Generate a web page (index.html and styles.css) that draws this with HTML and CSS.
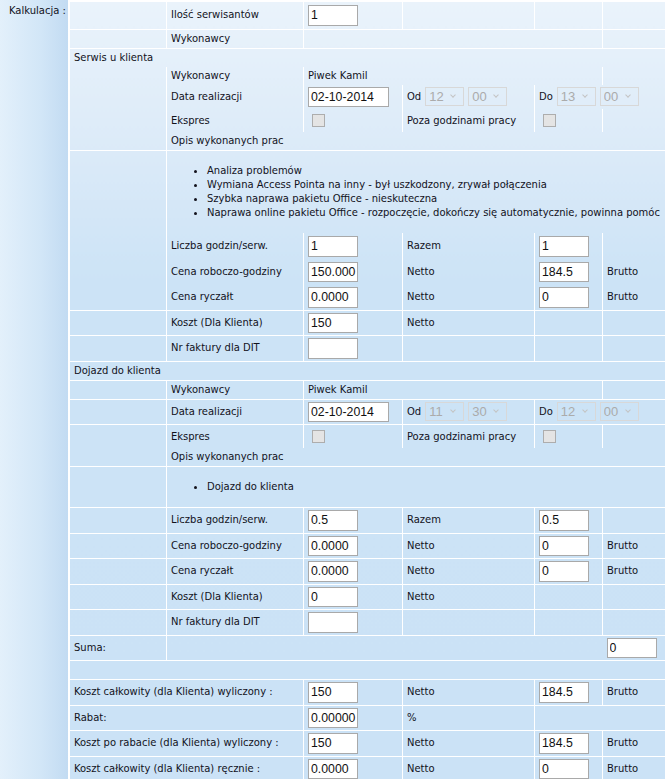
FILE: index.html
```html
<!DOCTYPE html>
<html lang="pl">
<head>
  <meta charset="UTF-8" />
  <title>Kalkulacja</title>
  <link rel="stylesheet" href="styles.css">
</head>
<body>

<div class="wrap">
  <!-- etykieta sekcji -->
  <div class="side">Kalkulacja :</div>

  <table class="calc">
    <colgroup>
      <col class="c1"><col class="c2"><col class="c3"><col class="c4"><col class="c5"><col class="c6">
    </colgroup>

    <tr class="first">
      <td></td><td>Ilość serwisantów</td><td><input class="num" value="1"></td><td></td><td></td><td></td>
    </tr>
    <tr>
      <td></td><td>Wykonawcy</td><td colspan="3"></td><td></td>
    </tr>
    <tr>
      <td colspan="6" class="sec">Serwis u klienta</td>
    </tr>

    <!-- Serwis u klienta -->
    <tr class="nt">
      <td></td><td>Wykonawcy</td><td colspan="3">Piwek Kamil</td><td></td>
    </tr>
    <tr class="nt">
      <td></td><td>Data realizacji</td>
      <td><input class="num date" value="02-10-2014"></td>
      <td>Od<span class="sel"><select disabled><option>12</option></select></span><span class="sel"><select disabled><option>00</option></select></span></td>
      <td colspan="2">Do<span class="sel"><select disabled><option>13</option></select></span><span class="sel"><select disabled><option>00</option></select></span></td>
    </tr>
    <tr class="nt">
      <td></td><td>Ekspres</td><td><input type="checkbox" disabled></td><td>Poza godzinami pracy</td><td><input type="checkbox" disabled></td><td></td>
    </tr>
    <tr class="nt">
      <td></td><td colspan="5">Opis wykonanych prac</td>
    </tr>
    <tr>
      <td></td>
      <td colspan="5">
        <ul class="jobs">
          <li>Analiza problemów</li>
          <li>Wymiana Access Pointa na inny - był uszkodzony, zrywał połączenia</li>
          <li>Szybka naprawa pakietu Office - nieskuteczna</li>
          <li>Naprawa online pakietu Office - rozpoczęcie, dokończy się automatycznie, powinna pomóc</li>
        </ul>
      </td>
    </tr>
    <tr class="nt pad">
      <td></td><td>Liczba godzin/serw.</td><td><input class="num" value="1"></td><td>Razem</td><td><input class="num" value="1"></td><td></td>
    </tr>
    <tr class="nt pad">
      <td></td><td>Cena roboczo-godziny</td><td><input class="num" value="150.000"></td><td>Netto</td><td><input class="num" value="184.5"></td><td>Brutto</td>
    </tr>
    <tr class="nt pad">
      <td></td><td>Cena ryczałt</td><td><input class="num" value="0.0000"></td><td>Netto</td><td><input class="num" value="0"></td><td>Brutto</td>
    </tr>
    <tr>
      <td></td><td>Koszt (Dla Klienta)</td><td><input class="num" value="150"></td><td>Netto</td><td></td><td></td>
    </tr>
    <tr>
      <td></td><td>Nr faktury dla DIT</td><td><input class="num" value=""></td><td></td><td></td><td></td>
    </tr>
    <tr>
      <td colspan="6" class="sec">Dojazd do klienta</td>
    </tr>

    <!-- Dojazd do klienta -->
    <tr>
      <td></td><td>Wykonawcy</td><td colspan="3">Piwek Kamil</td><td></td>
    </tr>
    <tr>
      <td></td><td>Data realizacji</td>
      <td><input class="num date" value="02-10-2014"></td>
      <td>Od<span class="sel"><select disabled><option>11</option></select></span><span class="sel"><select disabled><option>30</option></select></span></td>
      <td colspan="2">Do<span class="sel"><select disabled><option>12</option></select></span><span class="sel"><select disabled><option>00</option></select></span></td>
    </tr>
    <tr>
      <td></td><td>Ekspres</td><td><input type="checkbox" disabled></td><td>Poza godzinami pracy</td><td><input type="checkbox" disabled></td><td></td>
    </tr>
    <tr class="nt">
      <td></td><td colspan="5">Opis wykonanych prac</td>
    </tr>
    <tr>
      <td></td>
      <td colspan="5">
        <ul class="jobs">
          <li>Dojazd do klienta</li>
        </ul>
      </td>
    </tr>
    <tr>
      <td></td><td>Liczba godzin/serw.</td><td><input class="num" value="0.5"></td><td>Razem</td><td><input class="num" value="0.5"></td><td></td>
    </tr>
    <tr>
      <td></td><td>Cena roboczo-godziny</td><td><input class="num" value="0.0000"></td><td>Netto</td><td><input class="num" value="0"></td><td>Brutto</td>
    </tr>
    <tr>
      <td></td><td>Cena ryczałt</td><td><input class="num" value="0.0000"></td><td>Netto</td><td><input class="num" value="0"></td><td>Brutto</td>
    </tr>
    <tr>
      <td></td><td>Koszt (Dla Klienta)</td><td><input class="num" value="0"></td><td>Netto</td><td></td><td></td>
    </tr>
    <tr>
      <td></td><td>Nr faktury dla DIT</td><td><input class="num" value=""></td><td></td><td></td><td></td>
    </tr>

    <!-- podsumowanie -->
    <tr>
      <td class="sec">Suma:</td><td colspan="4" class="nr"></td><td><input class="num" value="0"></td>
    </tr>
    <tr>
      <td colspan="6" class="sec">&nbsp;</td>
    </tr>
    <tr>
      <td colspan="2" class="sec">Koszt całkowity (dla Klienta) wyliczony :</td><td><input class="num" value="150"></td><td>Netto</td><td><input class="num" value="184.5"></td><td>Brutto</td>
    </tr>
    <tr>
      <td colspan="2" class="sec">Rabat:</td><td><input class="num" value="0.00000"></td><td>%</td><td colspan="2"></td>
    </tr>
    <tr>
      <td colspan="2" class="sec">Koszt po rabacie (dla Klienta) wyliczony :</td><td><input class="num" value="150"></td><td>Netto</td><td><input class="num" value="184.5"></td><td>Brutto</td>
    </tr>
    <tr>
      <td colspan="2" class="sec">Koszt całkowity (dla Klienta) ręcznie :</td><td><input class="num" value="0.0000"></td><td>Netto</td><td><input class="num" value="0"></td><td>Brutto</td>
    </tr>
  </table>
</div>

</body>
</html>
```

FILE: styles.css
```css
body {
  margin: 0;
  overflow: hidden;
  font-family: "DejaVu Sans Condensed", "Liberation Sans", sans-serif;
  font-size: 11.1px;
  color: #12121c;
  background: #fff;
}
.wrap {
  display: flex;
  align-items: stretch;
  min-height: 100vh;
}
.side {
  flex: none;
  width: 69px;
  box-sizing: border-box;
  padding: 4px 0 0 9px;
  line-height: 14px;
  border-right: 1px solid #fff;
  background: linear-gradient(to right, #e3f0fb, #d2e6f7 60%, #c2dbf2);
}

/* tabela kalkulacji */
.calc {
  flex: none;
  align-self: flex-start;
  width: 634px;
  margin-top: 1px;
  table-layout: fixed;
  border-collapse: collapse;
  background: linear-gradient(#eaf3fb 0, #dbeaf8 150px, #cce3f6 280px, #cbe2f6 100%);
}
.calc col.c1 { width: 97px; }
.calc col.c2 { width: 137px; }
.calc col.c3 { width: 99px; }
.calc col.c4 { width: 132px; }
.calc col.c5 { width: 68px; }
.calc col.c6 { width: 101px; }

.calc td {
  border: 1px solid #fff;
  padding: 2px 4px;
  line-height: 14px;
  vertical-align: middle;
  white-space: nowrap;
}
.calc tr.first > td {
  padding-top: 3px;
  padding-bottom: 3px;
}
.calc td.sec {
  padding-left: 4px;
}
.calc tr.nt > td {
  border-top-style: hidden;
}
.calc tr.pad > td {
  padding-top: 3px;
}
.calc td.nr {
  border-right-style: hidden;
}

/* pola */
.calc input.num {
  box-sizing: border-box;
  width: 50px;
  height: 20.5px;
  margin: 0;
  padding: 0 1px 0 2px;
  border: 1px solid #a9a9a9;
  background: #fff;
  color: #111;
  font-family: "Liberation Sans", Arial, sans-serif;
  font-size: 12.3px;
  vertical-align: middle;
}
.calc input.date {
  width: 81px;
}
.calc input[type="checkbox"] {
  appearance: none;
  width: 13px;
  height: 13px;
  margin: 3px 3px 3px 4px;
  border: 1px solid #adadad;
  background: #e4e4e4;
  vertical-align: middle;
}

.sel {
  position: relative;
  display: inline-block;
  margin-left: 4px;
  vertical-align: middle;
}
.sel select {
  appearance: none;
  box-sizing: border-box;
  width: 39px;
  height: 19px;
  margin: 0;
  padding: 0 0 0 3px;
  border: 1px solid #d8d8d8;
  background: transparent;
  color: #ababab;
  font-family: "Liberation Sans", Arial, sans-serif;
  font-size: 13px;
  opacity: 1;
}
.sel::after {
  content: "";
  position: absolute;
  right: 9px;
  top: 6px;
  width: 3px;
  height: 3px;
  border-right: 1px solid #c4c4c4;
  border-bottom: 1px solid #c4c4c4;
  transform: rotate(45deg);
}

.jobs {
  margin: 11px 0;
  padding-left: 36px;
}
.jobs li {
  line-height: 14px;
}
```
